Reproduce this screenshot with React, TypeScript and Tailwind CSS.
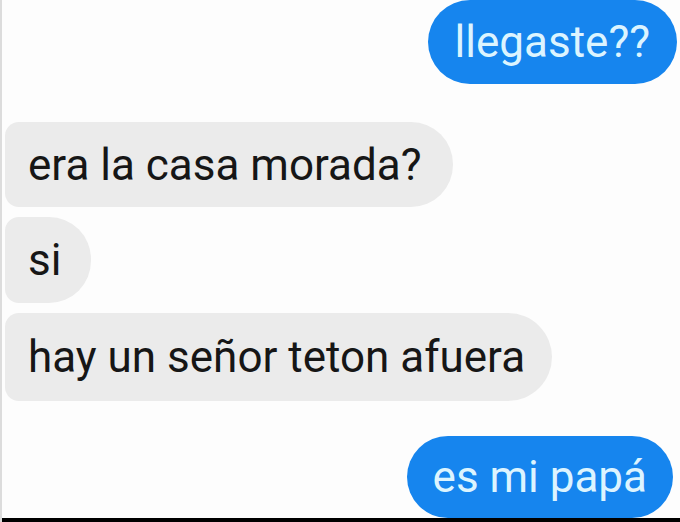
export default function App() {
  return (
    <div className="relative flex h-[522px] w-[680px] flex-col overflow-hidden border-l-2 border-[#dcdcdc] bg-[#fdfdfd] font-['Roboto',sans-serif] text-[44px] leading-none">
      {/* sent */}
      <div className="flex justify-end pr-[3px]">
        <div className="flex h-[84px] items-center rounded-[42px] bg-[#1685ee] px-[27px] text-[#dcf4ff]">
          llegaste??
        </div>
      </div>

      {/* received */}
      <div className="mt-[38px] flex flex-col items-start gap-[10px] pl-[3px] text-[#161616]">
        <div className="flex h-[85px] items-center rounded-l-[14px] rounded-r-[42px] bg-[#ebebeb] pl-[23px] pr-[31px]">
          era la casa morada?
        </div>
        <div className="flex h-[86px] items-center rounded-l-[14px] rounded-r-[42px] bg-[#ebebeb] pl-[23px] pr-[30px]">
          si
        </div>
        <div className="flex h-[88px] items-center rounded-l-[14px] rounded-r-[44px] bg-[#ebebeb] pl-[23px] pr-[27px]">
          hay un señor teton afuera
        </div>
      </div>

      {/* sent */}
      <div className="mt-[35px] flex justify-end pr-[7px]">
        <div className="flex h-[82px] items-center rounded-[41px] bg-[#1685ee] px-[26px] text-[#dcf4ff]">
          es mi papá
        </div>
      </div>

      <div className="mt-auto h-[4px] bg-black" />
    </div>
  );
}
